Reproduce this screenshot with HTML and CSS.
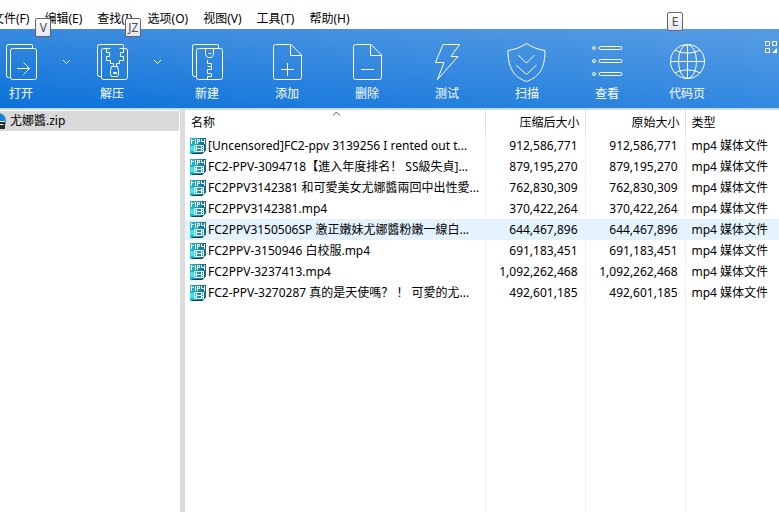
FILE: index.html
```
<!DOCTYPE html>
<html lang="zh-CN">

<head>
    <meta charset="utf-8">
    <title>尤娜醬.zip</title>
    <meta name="viewport" content="width=device-width, initial-scale=1">
    <link rel="stylesheet" href="styles.css">
</head>

<body>
    <svg class="defs" aria-hidden="true">
        <defs>
            <linearGradient id="mp4-bg" x1="0" y1="0" x2="1" y2="0">
                <stop offset="0" stop-color="#1cc3cf" />
                <stop offset="0.500" stop-color="#1a93b0" />
                <stop offset="1" stop-color="#17628f" />
            </linearGradient>
        </defs>
        <symbol id="mp4" viewBox="0 0 16 16">
            <path fill="url(#mp4-bg)" d="M0 0h16v12l-4 4H0z" />
            <path fill="#3fe6e6" d="M0 8h4v5H0z" />
            <path fill="#0b3f66" d="M2 15h10l4-4v1l-4 4H2z" />
            <path fill="none" stroke="#fff" d="M1.500 6V1M2 2.500h2M5.500 6V1M7.500 6V1.500h2v2h-2M11.500 1v2.500h3M14.500 1v5" />
            <path fill="#dffcff" fill-rule="evenodd" d="M4 7h10v7H4zM5 8v1h1V8zM5 10v1h1v-1zM5 12v1h1v-1zM7 8v2h4V8zM7 11v2h4v-2zM12 8v1h1V8zM12 10v1h1v-1zM12 12v1h1v-1z" />
        </symbol>
    </svg>

    <div class="window">
        <nav class="menu">
            <button>文件(F)</button>
            <button>编辑(E)<kbd>V</kbd></button>
            <button>查找(I)<kbd>JZ</kbd></button>
            <button>选项(O)</button>
            <button>视图(V)</button>
            <button>工具(T)</button>
            <button>帮助(H)</button>
        </nav>

        <div class="toolbar">
            <button class="tool">
                <svg viewBox="0 0 40 40"><path d="M9 36.500H7.500a2 2 0 0 1-2-2v-29a2 2 0 0 1 2-2h23a1 1 0 0 1 1 1V7M11.500 7.500h22a2 2 0 0 1 2 2v27a2 2 0 0 1-2 2h-22a2 2 0 0 1-2-2v-27a2 2 0 0 1 2-2zM16 27.500h12M22.500 21.500l6 6-6 6" /></svg>
                打开
            </button>
            <button class="more" aria-label="打开选项"><svg viewBox="0 0 11 6"><path d="M2 1l3.500 3.500L9 1" /></svg></button>
            <button class="tool">
                <svg viewBox="0 0 40 40"><path d="M9 35.500H7.500a2 2 0 0 1-2-2v-28a2 2 0 0 1 2-2h23a1 1 0 0 1 1 1V7M18 7.500h-6.500a2 2 0 0 0-2 2v27a2 2 0 0 0 2 2h22a2 2 0 0 0 2-2v-27a2 2 0 0 0-2-2H28M18.500 7.500h-4v4h3v4h-3v4h4v3h3v3M27.500 7.500h4v4h-3v4h3v4h-4v3h-3v3M19.500 25.500h6l1 4v4l-1 2h-6l-1-2v-4zM21.500 31.500h3v1h-3z" /></svg>
                解压
            </button>
            <button class="more last" aria-label="解压选项"><svg viewBox="0 0 11 6"><path d="M2 1l3.500 3.500L9 1" /></svg></button>
            <button class="tool">
                <svg viewBox="0 0 40 40"><path d="M9 35.500H7.500a2 2 0 0 1-2-2v-28a2 2 0 0 1 2-2h23a1 1 0 0 1 1 1V7M11.500 7.500h22a2 2 0 0 1 2 2v27a2 2 0 0 1-2 2h-22a2 2 0 0 1-2-2v-27a2 2 0 0 1 2-2zM18.500 7.500v6l2 3h4l2-3v-6M21.500 12.500h3M20.500 19v3.500h4v3h-4M24.500 25.500v3h-4v4h4v3h-4v3" /></svg>
                新建
            </button>
            <button class="tool">
                <svg viewBox="0 0 40 40"><path d="M24 3.500H8.500a2 2 0 0 0-2 2v31a2 2 0 0 0 2 2h24a2 2 0 0 0 2-2V14zM23.500 3.500v11h11M14 28.500h13M20.500 22v13" /></svg>
                添加
            </button>
            <button class="tool">
                <svg viewBox="0 0 40 40"><path d="M24 3.500H8.500a2 2 0 0 0-2 2v31a2 2 0 0 0 2 2h24a2 2 0 0 0 2-2V14zM23.500 3.500v11h11M14 28.500h13" /></svg>
                删除
            </button>
            <button class="tool">
                <svg viewBox="0 0 40 40"><path d="M16 3.500h16.500L24 15.500h7L10.500 38.500l6.500-17H8.500z" /></svg>
                测试
            </button>
            <button class="tool">
                <svg viewBox="0 0 40 40"><path d="M19.500 2.500c-6 4-12 6-18.500 7 0 15 4 26 18.500 31 14.500-5 18.500-16 18.500-31-6.500-1-12.500-3-18.500-7zM11 14l8.500 8 8-8M9 24l10.500 9.500 10-9.500" /></svg>
                扫描
            </button>
            <button class="tool">
                <svg viewBox="0 0 40 40"><path d="M13.500 5.500h20a1.500 1.500 0 0 1 0 3h-20a1.500 1.500 0 0 1 0-3zM13.500 18.500h20a1.500 1.500 0 0 1 0 3h-20a1.500 1.500 0 0 1 0-3zM13.500 31.500h20a1.500 1.500 0 0 1 0 3h-20a1.500 1.500 0 0 1 0-3z" /><circle cx="7" cy="7" r="1.500" /><circle cx="7" cy="20" r="1.500" /><circle cx="7" cy="33" r="1.500" /></svg>
                查看
            </button>
            <button class="tool">
                <svg viewBox="0 0 40 40"><circle cx="20.500" cy="20.500" r="17" /><ellipse cx="20.500" cy="20.500" rx="9" ry="17" /><path d="M20.500 3.500v34M3.500 20.500h34M8 9c7 4 18 4 25 0M8 32c7-4 18-4 25 0" /></svg>
                代码页
                <kbd>E</kbd>
            </button>
            <button class="layout" aria-label="布局"><svg viewBox="0 0 13 13"><path d="M.500 .500h4v4h-4zM7.500 .500h4v4h-4zM.500 7.500h4v4h-4z" /><path class="solid" d="M12 7v5H7z" /></svg></button>
        </div>

        <main>
            <aside>
                <a class="archive" href="#">
                    <svg viewBox="0 0 16 16"><circle cx="8" cy="8" r="8" fill="#1684d8" /><path fill="#222c38" d="M0 9h15v7H0z" /><path fill="none" stroke="#fff" d="M0 8.500h15M9.500 14v-2.500h4" /></svg>
                    尤娜醬.zip
                </a>
            </aside>
            <section class="files">
                <table>
                    <thead>
                        <tr>
                            <th class="name">名称<svg class="sort" viewBox="0 0 9 5"><path d="M1 4.500L4.500 1 8 4.500" /></svg></th>
                            <th class="size">压缩后大小</th>
                            <th class="size">原始大小</th>
                            <th>类型</th>
                        </tr>
                    </thead>
                    <tbody>
                        <tr>
                            <td><svg><use href="#mp4" /></svg>[Uncensored]FC2-ppv 3139256 I rented out t...</td>
                            <td>912,586,771</td>
                            <td>912,586,771</td>
                            <td>mp4 媒体文件</td>
                        </tr>
                        <tr>
                            <td><svg><use href="#mp4" /></svg>FC2-PPV-3094718【進入年度排名！ SS級失貞]...</td>
                            <td>879,195,270</td>
                            <td>879,195,270</td>
                            <td>mp4 媒体文件</td>
                        </tr>
                        <tr>
                            <td><svg><use href="#mp4" /></svg>FC2PPV3142381 和可愛美女尤娜醬兩回中出性愛...</td>
                            <td>762,830,309</td>
                            <td>762,830,309</td>
                            <td>mp4 媒体文件</td>
                        </tr>
                        <tr>
                            <td><svg><use href="#mp4" /></svg>FC2PPV3142381.mp4</td>
                            <td>370,422,264</td>
                            <td>370,422,264</td>
                            <td>mp4 媒体文件</td>
                        </tr>
                        <tr class="hover">
                            <td><svg><use href="#mp4" /></svg>FC2PPV3150506SP 激正嫩妹尤娜醬粉嫩一線白...</td>
                            <td>644,467,896</td>
                            <td>644,467,896</td>
                            <td>mp4 媒体文件</td>
                        </tr>
                        <tr>
                            <td><svg><use href="#mp4" /></svg>FC2PPV-3150946 白校服.mp4</td>
                            <td>691,183,451</td>
                            <td>691,183,451</td>
                            <td>mp4 媒体文件</td>
                        </tr>
                        <tr>
                            <td><svg><use href="#mp4" /></svg>FC2PPV-3237413.mp4</td>
                            <td>1,092,262,468</td>
                            <td>1,092,262,468</td>
                            <td>mp4 媒体文件</td>
                        </tr>
                        <tr>
                            <td><svg><use href="#mp4" /></svg>FC2-PPV-3270287 真的是天使嗎？ ！ 可愛的尤...</td>
                            <td>492,601,185</td>
                            <td>492,601,185</td>
                            <td>mp4 媒体文件</td>
                        </tr>
                    </tbody>
                </table>
                <!-- column lines go on down to the bottom of the pane -->
                <div class="rest"><i></i><i></i><i></i></div>
            </section>
        </main>
    </div>
</body>

</html>
```
FILE: styles.css
```
body {
    margin: 0;
    background: #fff;
    color: #000;
    font: 12px/20px "Noto Sans", "Noto Sans CJK SC", sans-serif;
}

button {
    border: 0;
    padding: 0;
    background: none;
    color: inherit;
    font: inherit;
    white-space: nowrap;
}

svg {
    fill: none;
    stroke: currentColor;
}

.defs {
    position: absolute;
    width: 0;
    height: 0;
}

.window {
    display: flex;
    flex-direction: column;
    min-height: 100vh;
    overflow: hidden;
}

/* menu */
.menu {
    display: flex;
    gap: 15px;
    height: 20px;
    padding: 9px 0 0;
    margin-left: -8px;
}

.menu button {
    position: relative;
}

kbd {
    position: absolute;
    z-index: 1;
    box-sizing: border-box;
    min-width: 16px;
    height: 19px;
    padding: 0 2px;
    border: 1px solid #666;
    border-radius: 2px;
    background: linear-gradient(#fff, #e4e5f0);
    color: #4c4c4c;
    font: 12px/17px "Noto Sans", sans-serif;
    text-align: center;
}

.menu kbd {
    top: 9px;
    left: -9px;
}

.menu button:nth-child(3) kbd {
    left: 28px;
}

/* toolbar */
.toolbar {
    display: flex;
    height: 79px;
    border-bottom: 2px solid #c5dcf4;
    background:
        linear-gradient(to right, transparent, rgba(255, 255, 255, .16)),
        linear-gradient(#388ade, #0a71da);
    background-origin: border-box;
    color: #fff;
}

.tool {
    position: relative;
    display: flex;
    flex: none;
    flex-direction: column;
    align-items: center;
    gap: 3px;
    width: 80px;
    padding-top: 12px;
}

.tool:first-child {
    margin-left: -19px;
}

.tool svg {
    width: 40px;
    height: 40px;
    overflow: visible;
}

.tool kbd {
    top: -17px;
    left: 20px;
}

.more {
    flex: none;
    width: 11px;
    padding-bottom: 16px;
}

.more svg {
    width: 11px;
    height: 6px;
}

.last {
    margin-right: 4px;
}

.layout {
    align-self: flex-start;
    width: 13px;
    margin: 12px 1px 0 auto;
    line-height: 13px;
}

.layout svg {
    display: block;
    width: 13px;
    height: 13px;
}

.solid {
    fill: #fff;
    stroke: none;
}

/* panes */
main {
    display: flex;
    flex: 1;
}

aside {
    flex: none;
    width: 180px;
    border-right: 5px solid #dcdcdc;
}

.archive {
    display: flex;
    align-items: center;
    gap: 4px;
    height: 20px;
    margin: 1px 1px 0 -10px;
    background: #d9d9d9;
    color: #000;
    text-decoration: none;
}

.archive svg {
    width: 16px;
    height: 16px;
    stroke: none;
}

.files {
    display: flex;
    flex: 1;
    flex-direction: column;
    min-width: 0;
}

table {
    width: 100%;
    border-collapse: collapse;
    table-layout: fixed;
}

th,
td {
    box-sizing: border-box;
    height: 21px;
    padding: 0 6px;
    border-left: 1px solid #f0f0f0;
    text-align: left;
    font-weight: normal;
    white-space: nowrap;
}

th {
    position: relative;
    height: 25px;
    padding: 0 5px 0 6px;
    border-color: #e2e2e2;
}

th:first-child,
td:first-child {
    border-left: 0;
}

td:first-child {
    padding: 0 0 0 5px;
}

.name {
    width: 300px;
}

.size {
    width: 100px;
}

.size,
td:nth-child(2),
td:nth-child(3) {
    text-align: right;
}

td:nth-child(2),
td:nth-child(3) {
    padding-right: 7px;
}

.sort {
    position: absolute;
    top: 1px;
    left: 147px;
    width: 9px;
    height: 5px;
    stroke: #555;
}

td svg {
    width: 16px;
    height: 16px;
    margin-right: 2px;
    stroke: none;
    vertical-align: middle;
}

.hover td {
    background: #e5f3ff;
}

.rest {
    display: flex;
    flex: 1;
    padding-left: 300px;
}

.rest i {
    flex: none;
    box-sizing: border-box;
    width: 100px;
    border-left: 1px solid #f0f0f0;
}
```
